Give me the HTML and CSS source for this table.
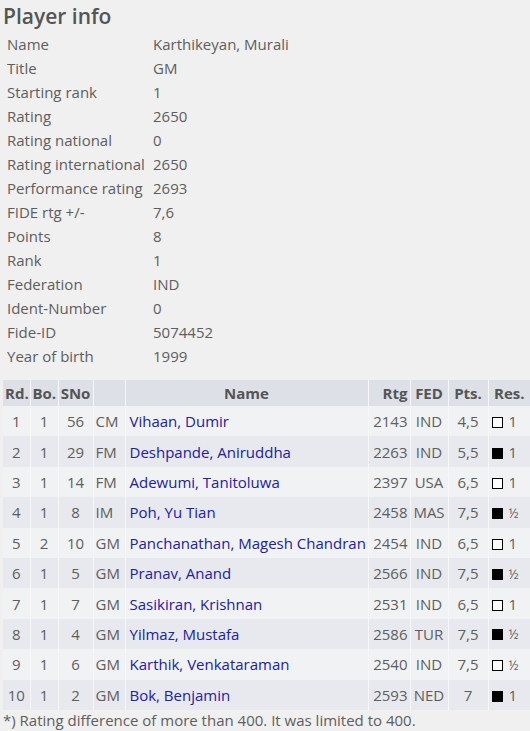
FILE: index.html
```html
<!DOCTYPE html>
<html>
<head>
<meta charset="utf-8">
<link rel="stylesheet" href="styles.css">
</head>
<body>
<div class="page">
  <h2 class="title">Player info</h2>
  <table class="info">
    <tr><td class="lbl">Name</td><td>Karthikeyan, Murali</td></tr>
    <tr><td class="lbl">Title</td><td>GM</td></tr>
    <tr><td class="lbl">Starting rank</td><td>1</td></tr>
    <tr><td class="lbl">Rating</td><td>2650</td></tr>
    <tr><td class="lbl">Rating national</td><td>0</td></tr>
    <tr><td class="lbl">Rating international</td><td>2650</td></tr>
    <tr><td class="lbl">Performance rating</td><td>2693</td></tr>
    <tr><td class="lbl">FIDE rtg +/-</td><td>7,6</td></tr>
    <tr><td class="lbl">Points</td><td>8</td></tr>
    <tr><td class="lbl">Rank</td><td>1</td></tr>
    <tr><td class="lbl">Federation</td><td>IND</td></tr>
    <tr><td class="lbl">Ident-Number</td><td>0</td></tr>
    <tr><td class="lbl">Fide-ID</td><td>5074452</td></tr>
    <tr><td class="lbl">Year of birth</td><td>1999</td></tr>
  </table>
  <table class="games">
    <colgroup>
      <col class="c-rd"><col class="c-bo"><col class="c-sno"><col class="c-ti"><col class="c-name"><col class="c-rtg"><col class="c-fed"><col class="c-pts"><col class="c-res">
    </colgroup>
    <thead>
      <tr><th>Rd.</th><th>Bo.</th><th>SNo</th><th></th><th>Name</th><th class="r">Rtg</th><th>FED</th><th>Pts.</th><th>Res.</th></tr>
    </thead>
    <tbody>
      <tr><td>1</td><td>1</td><td>56</td><td class="ti">CM</td><td class="nm"><a href="#">Vihaan, Dumir</a></td><td class="r">2143</td><td>IND</td><td>4,5</td><td class="res"><span class="sq w"></span>1</td></tr>
      <tr><td>2</td><td>1</td><td>29</td><td class="ti">FM</td><td class="nm"><a href="#">Deshpande, Aniruddha</a></td><td class="r">2263</td><td>IND</td><td>5,5</td><td class="res"><span class="sq b"></span>1</td></tr>
      <tr><td>3</td><td>1</td><td>14</td><td class="ti">FM</td><td class="nm"><a href="#">Adewumi, Tanitoluwa</a></td><td class="r">2397</td><td>USA</td><td>6,5</td><td class="res"><span class="sq w"></span>1</td></tr>
      <tr><td>4</td><td>1</td><td>8</td><td class="ti">IM</td><td class="nm"><a href="#">Poh, Yu Tian</a></td><td class="r">2458</td><td>MAS</td><td>7,5</td><td class="res"><span class="sq b"></span><span class="half">½</span></td></tr>
      <tr><td>5</td><td>2</td><td>10</td><td class="ti">GM</td><td class="nm"><a href="#">Panchanathan, Magesh Chandran</a></td><td class="r">2454</td><td>IND</td><td>6,5</td><td class="res"><span class="sq w"></span>1</td></tr>
      <tr><td>6</td><td>1</td><td>5</td><td class="ti">GM</td><td class="nm"><a href="#">Pranav, Anand</a></td><td class="r">2566</td><td>IND</td><td>7,5</td><td class="res"><span class="sq b"></span><span class="half">½</span></td></tr>
      <tr><td>7</td><td>1</td><td>7</td><td class="ti">GM</td><td class="nm"><a href="#">Sasikiran, Krishnan</a></td><td class="r">2531</td><td>IND</td><td>6,5</td><td class="res"><span class="sq w"></span>1</td></tr>
      <tr><td>8</td><td>1</td><td>4</td><td class="ti">GM</td><td class="nm"><a href="#">Yilmaz, Mustafa</a></td><td class="r">2586</td><td>TUR</td><td>7,5</td><td class="res"><span class="sq b"></span><span class="half">½</span></td></tr>
      <tr><td>9</td><td>1</td><td>6</td><td class="ti">GM</td><td class="nm"><a href="#">Karthik, Venkataraman</a></td><td class="r">2540</td><td>IND</td><td>7,5</td><td class="res"><span class="sq w"></span><span class="half">½</span></td></tr>
      <tr><td>10</td><td>1</td><td>2</td><td class="ti">GM</td><td class="nm"><a href="#">Bok, Benjamin</a></td><td class="r">2593</td><td>NED</td><td>7</td><td class="res"><span class="sq b"></span>1</td></tr>
    </tbody>
  </table>
  <p class="note">*) Rating difference of more than 400. It was limited to 400.</p>
</div>
</body>
</html>
```
FILE: styles.css
```css
html, body {
  margin: 0;
  padding: 0;
  background: #f0f0f0;
}
body {
  font-family: "Open Sans", "Noto Sans", sans-serif;
  font-size: 15px;
  color: #5e5e5e;
  overflow: hidden;
}
.page {
  padding: 0 0 0 3px;
}
.title {
  margin: 0;
  padding-top: 2px;
  height: 30px;
  font-size: 21px;
  font-weight: 600;
  color: #555;
  line-height: 28px;
}
.info {
  border-collapse: collapse;
  margin-left: 0;
}
.info td {
  height: 24px;
  padding: 0 0 0 4px;
  line-height: 24px;
  white-space: nowrap;
}
.info td.lbl {
  width: 142px;
}
.games {
  margin-top: 12px;
  border-collapse: collapse;
  table-layout: fixed;
  width: 527px;
}
.c-rd { width: 27px; }
.c-bo { width: 28px; }
.c-sno { width: 35px; }
.c-ti { width: 32px; }
.c-name { width: 243px; }
.c-rtg { width: 42px; }
.c-fed { width: 38px; }
.c-pts { width: 40px; }
.c-res { width: 42px; }
.games th, .games td {
  padding: 0 2px;
  text-align: center;
  white-space: nowrap;
  overflow: visible;
  border-left: 1px solid #f7f7f8;
}
.games th:first-child, .games td:first-child {
  border-left: none;
}
.games th {
  height: 26px;
  background: #dde0e6;
  font-weight: 700;
  color: #555;
}
.games td {
  height: 30.4px;
  line-height: 20px;
}
.games tbody tr:nth-child(odd) td {
  background: #f1f2f4;
}
.games tbody tr:nth-child(even) td {
  background: #e7e9ee;
}
.games .r {
  text-align: right;
}
.games td.ti {
  text-align: left;
}
.games td.nm {
  text-align: left;
  padding-left: 4px;
}
.games td.res {
  text-align: left;
  padding-left: 3px;
}
.games a {
  color: #2020a8;
  text-decoration: none;
}
.sq {
  display: inline-block;
  width: 9px;
  height: 9px;
  border: 1px solid #000;
  margin-right: 6px;
  vertical-align: -1px;
}
.sq.w { background: #fff; }
.sq.b { background: #000; }
.half {
  font-size: 13px;
}
.note {
  margin: 0;
  line-height: 20px;
}
```
